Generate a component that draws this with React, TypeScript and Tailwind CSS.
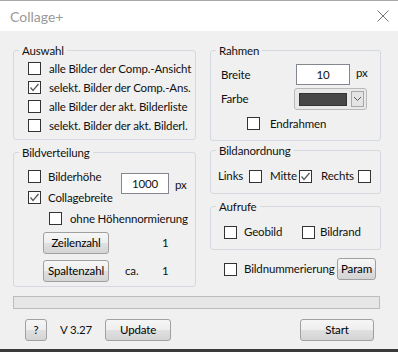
import React from "react";

const font = { fontFamily: 'Lato, "Liberation Sans", sans-serif' };

function Check({ checked = false }: { checked?: boolean }) {
  return (
    <span className="inline-flex h-[13px] w-[13px] shrink-0 items-center justify-center border border-[#333333] bg-white">
      {checked && (
        <svg width="11" height="11" viewBox="0 0 11 11">
          <path d="M1.5 5.5 L4 8.5 L9.5 2" fill="none" stroke="#5a5a5a" strokeWidth="1.3" />
        </svg>
      )}
    </span>
  );
}

function Btn({ children, className = "" }: { children: React.ReactNode; className?: string }) {
  return (
    <div
      className={
        "flex h-[22px] shrink-0 items-center justify-center rounded-[3px] border border-[#a0a0a0] bg-[linear-gradient(#f6f6f6_0%,#eeeeee_50%,#e0e0e0_51%,#d4d4d4_100%)] text-black " +
        className
      }
    >
      {children}
    </div>
  );
}

function Group({ title, children, className = "" }: { title: string; children: React.ReactNode; className?: string }) {
  return (
    <div className={"flex flex-col rounded-[3px] border border-[#d3d9de] " + className}>
      <span className="-mt-[9px] ml-[5px] self-start bg-[#f0f0f0] px-[3px] leading-[17px]">{title}</span>
      {children}
    </div>
  );
}

export default function App() {
  return (
    <div className="h-[352px] w-[398px] overflow-hidden whitespace-nowrap bg-[#f0f0f0] text-[11.5px] tracking-[-0.15px] text-[#111111]" style={font}>
      {/* title bar */}
      <div className="flex h-[31px] items-center justify-between border-t border-[#aaaaaa] bg-white pl-[10px] pr-[9px]">
        <span className="text-[14px] tracking-normal text-[#999999]">Collage+</span>
        <svg width="12" height="12" viewBox="0 0 12 12">
          <path d="M0.5 0.5 L11.5 11.5 M11.5 0.5 L0.5 11.5" stroke="#777777" strokeWidth="1" />
        </svg>
      </div>

      <div className="flex h-[318px] flex-col px-[13px] pt-[19px]">
        <div className="flex gap-[14px]">
          {/* left column */}
          <div className="flex w-[183px] flex-col">
            <Group title="Auswahl" className="h-[90px]">
              <div className="flex flex-col pl-[14px]">
                {[
                  ["alle Bilder der Comp.-Ansicht", false],
                  ["selekt. Bilder der Comp.-Ans.", true],
                  ["alle Bilder der akt. Bilderliste", false],
                  ["selekt. Bilder der akt. Bilderl.", false],
                ].map(([t, c]) => (
                  <div key={t as string} className="flex h-[19px] items-center gap-[8px]">
                    <Check checked={c as boolean} />
                    <span>{t as string}</span>
                  </div>
                ))}
              </div>
            </Group>
            <Group title="Bildverteilung" className="mt-[12px] h-[135px]">
              <div className="mt-[5px] flex pl-[14px]">
                <div className="flex w-[93px] flex-col">
                  <div className="flex h-[21px] items-center gap-[7px]">
                    <Check />
                    <span>Bilderhöhe</span>
                  </div>
                  <div className="flex h-[21px] items-center gap-[7px]">
                    <Check checked />
                    <span>Collagebreite</span>
                  </div>
                </div>
                <div className="mt-[7px] flex items-start gap-[6px]">
                  <div className="flex h-[21px] w-[48px] items-center justify-center border border-[#828790] bg-white">1000</div>
                  <span className="mt-[3px]">px</span>
                </div>
              </div>
              <div className="flex h-[21px] items-center gap-[8px] pl-[35px]">
                <Check />
                <span>ohne Höhennormierung</span>
              </div>
              <div className="mt-[3px] flex h-[22px] items-center">
                <Btn className="ml-[29px] w-[66px]">Zeilenzahl</Btn>
                <span className="ml-[53px]">1</span>
              </div>
              <div className="mt-[6px] flex h-[22px] items-center">
                <Btn className="ml-[29px] w-[66px]">Spaltenzahl</Btn>
                <span className="ml-[16px] w-[37px]">ca.</span>
                <span>1</span>
              </div>
            </Group>
          </div>

          {/* right column */}
          <div className="flex w-[171px] flex-col">
            <Group title="Rahmen" className="h-[91px]">
              <div className="flex flex-col pl-[10px]">
                <div className="mt-[5px] flex h-[21px] items-center">
                  <span className="w-[75px]">Breite</span>
                  <div className="flex h-[21px] w-[54px] items-center justify-center border border-[#828790] bg-white">10</div>
                  <span className="ml-[6px] -mt-[4px]">px</span>
                </div>
                <div className="mt-[3px] flex h-[22px] items-center">
                  <span className="w-[73px]">Farbe</span>
                  <div className="flex h-[22px] w-[73px] items-center gap-[4px] rounded-[3px] border border-[#b9b9b9] bg-[#e9e9e9] pl-[4px]">
                    <div className="h-[13px] w-[48px] border border-[#333333] bg-[#474747]" />
                    <div className="flex h-[16px] w-[13px] items-center justify-center border border-[#a8a8a8] bg-[#e4e4e4]">
                      <svg width="9" height="6" viewBox="0 0 9 6">
                        <path d="M1 1 L4.5 4.5 L8 1" fill="none" stroke="#555555" strokeWidth="1" />
                      </svg>
                    </div>
                  </div>
                </div>
                <div className="mt-[4px] flex h-[19px] items-center gap-[10px] pl-[26px]">
                  <Check />
                  <span>Endrahmen</span>
                </div>
              </div>
            </Group>
            <Group title="Bildanordnung" className="mt-[9px] h-[44px]">
              <div className="mt-[7px] flex h-[20px] items-center pl-[7px]">
                <span className="w-[31px]">Links</span>
                <Check />
                <span className="ml-[8px] w-[29px]">Mitte</span>
                <Check checked />
                <span className="ml-[9px] w-[37px]">Rechts</span>
                <Check />
              </div>
            </Group>
            <Group title="Aufrufe" className="mt-[12px] h-[44px]">
              <div className="mt-[7px] flex h-[20px] items-center pl-[13px]">
                <Check />
                <span className="ml-[7px] w-[58px]">Geobild</span>
                <Check />
                <span className="ml-[5px]">Bildrand</span>
              </div>
            </Group>
            <div className="mt-[8px] flex h-[22px] items-center pl-[14px]">
              <Check />
              <span className="ml-[7px]">Bildnummerierung</span>
              <Btn className="ml-auto mr-[5px] w-[39px]">Param</Btn>
            </div>
          </div>
        </div>

        {/* progress */}
        <div className="mt-[9px] h-[13px] w-[367px] border border-[#bcbcbc] bg-[#e6e6e6]" />

        {/* bottom row */}
        <div className="mt-[10px] flex items-center">
          <Btn className="ml-[12px] w-[22px]">?</Btn>
          <span className="ml-[13px]">V 3.27</span>
          <Btn className="ml-[13px] w-[66px]">Update</Btn>
          <Btn className="ml-auto mr-[11px] w-[74px]">Start</Btn>
        </div>
      </div>
      <div className="h-[3px] bg-[#3a3a3a]" />
    </div>
  );
}
